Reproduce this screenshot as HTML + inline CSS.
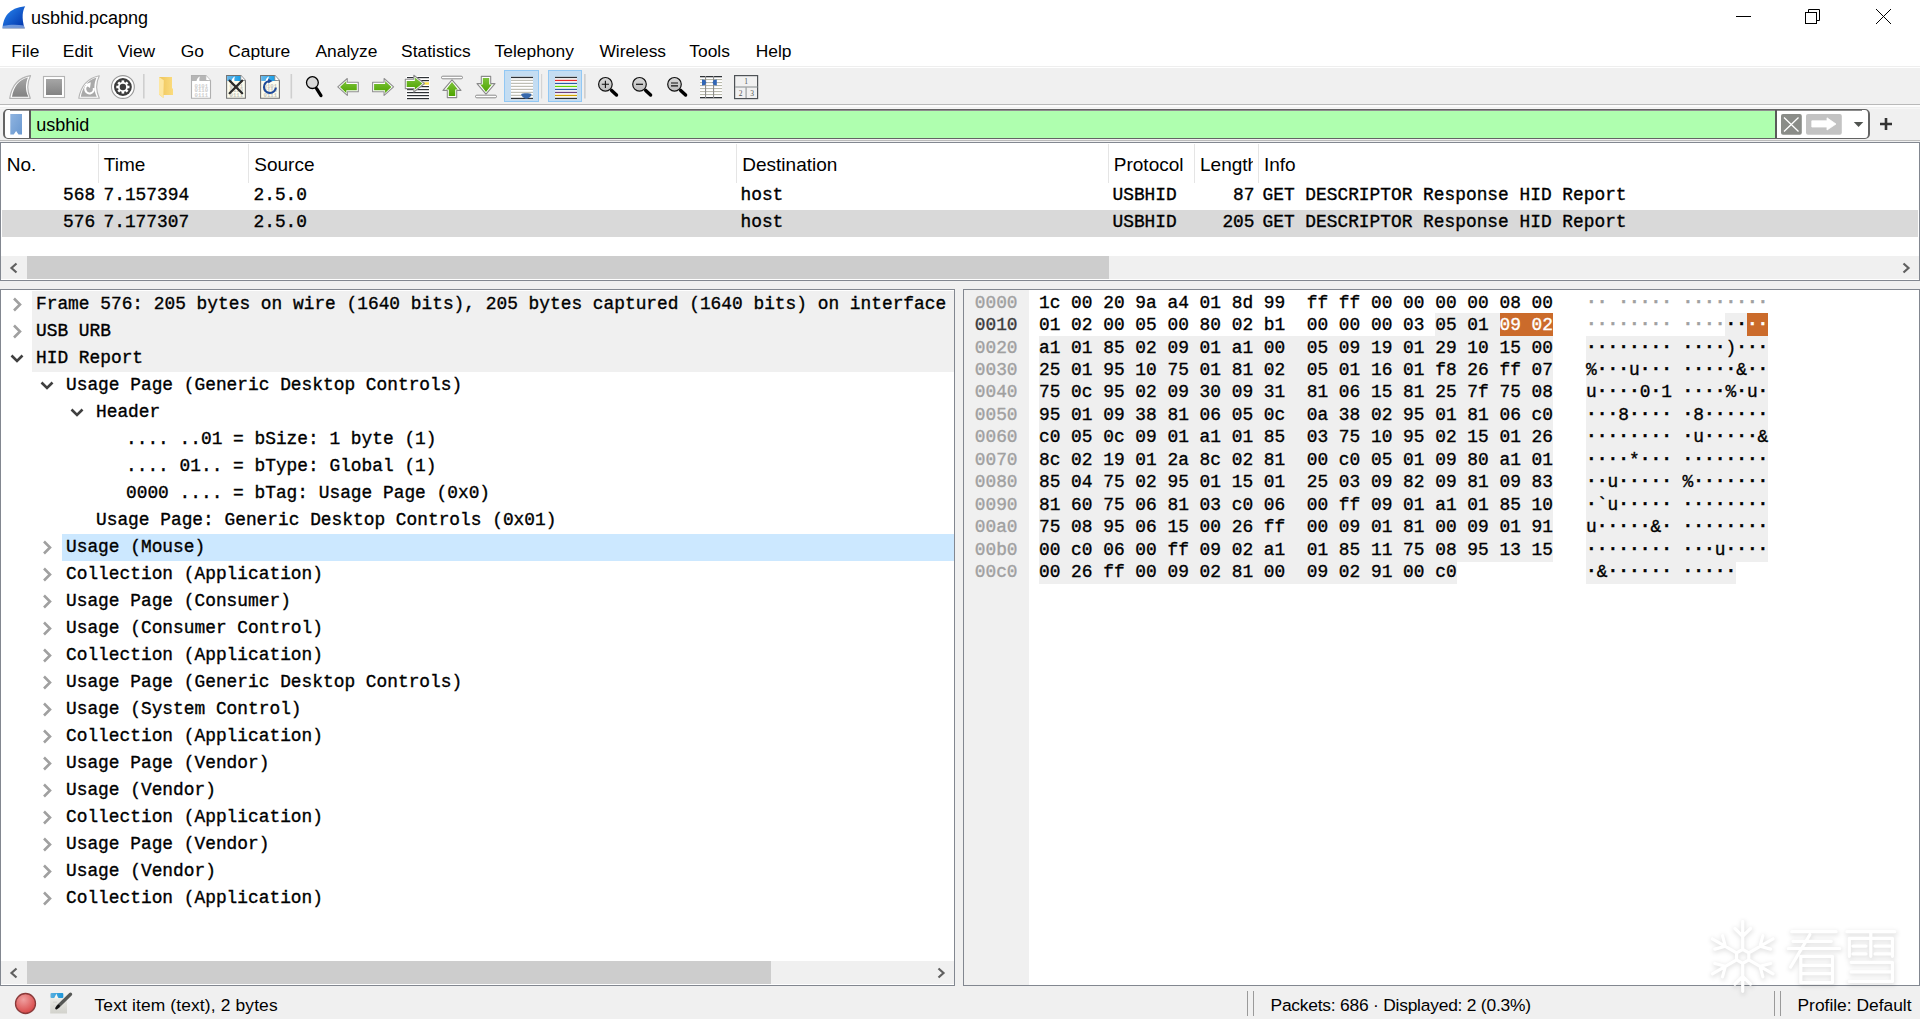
<!DOCTYPE html>
<html><head><meta charset="utf-8"><title>usbhid.pcapng</title>
<style>
html,body{margin:0;padding:0;}
body{width:1920px;height:1019px;overflow:hidden;position:relative;background:#f0f0f0;
font-family:"Liberation Sans", sans-serif;-webkit-font-smoothing:antialiased;}
svg{display:block;overflow:visible}
.m{-webkit-text-stroke:0.35px}
.d{font-weight:bold;position:relative;top:-1px}
</style></head><body>
<div style="position:absolute;left:0px;top:0px;width:1920px;height:66px;background:#ffffff;"></div>
<svg style="position:absolute;left:2px;top:5px;" width="25" height="24" viewBox="0 0 25 24"><defs><linearGradient id="tg" x1="0" y1="0" x2="1" y2="1">
<stop offset="0" stop-color="#2a8af2"/><stop offset="1" stop-color="#0030a8"/></linearGradient></defs>
<path d="M0.6 23.2 C1.2 12.5 6.5 2.8 23.2 1.2 C20.6 5.5 19.4 12.5 22.6 23.2 Z" fill="url(#tg)"/>
<path d="M0.6 23.2 H22.6 L22 20.5 C15 19.2 7 19.5 1.2 20.8 Z" fill="#8fb0e6" opacity="0.75"/>
<rect x="0.5" y="22.8" width="22.5" height="1" fill="#a0a8b8" opacity="0.6"/></svg>
<div style="position:absolute;left:31px;top:6.26px;height:25px;line-height:25px;font-family:'Liberation Sans', sans-serif;font-size:18px;color:#000;white-space:pre;">usbhid.pcapng</div>
<div style="position:absolute;left:1736px;top:16px;width:15px;height:1px;background:#000;"></div>
<svg style="position:absolute;left:1800px;top:5px;" width="26" height="26" viewBox="0 0 26 26"><rect x="5.5" y="7.5" width="11" height="11" fill="none" stroke="#000" stroke-width="1"/><path d="M8.5 7.5 V4.5 H19.5 V15.5 H16.5" fill="none" stroke="#000" stroke-width="1"/></svg>
<svg style="position:absolute;left:1870px;top:3px;" width="28" height="28" viewBox="0 0 28 28"><path d="M6 6 L21 21 M21 6 L6 21" stroke="#000" stroke-width="1"/></svg>
<div style="position:absolute;left:11.3px;top:38.97px;height:24px;line-height:24px;font-family:'Liberation Sans', sans-serif;font-size:17.4px;color:#000;white-space:pre;">File</div>
<div style="position:absolute;left:62.8px;top:38.97px;height:24px;line-height:24px;font-family:'Liberation Sans', sans-serif;font-size:17.4px;color:#000;white-space:pre;">Edit</div>
<div style="position:absolute;left:117.8px;top:38.97px;height:24px;line-height:24px;font-family:'Liberation Sans', sans-serif;font-size:17.4px;color:#000;white-space:pre;">View</div>
<div style="position:absolute;left:180.8px;top:38.97px;height:24px;line-height:24px;font-family:'Liberation Sans', sans-serif;font-size:17.4px;color:#000;white-space:pre;">Go</div>
<div style="position:absolute;left:228.3px;top:38.97px;height:24px;line-height:24px;font-family:'Liberation Sans', sans-serif;font-size:17.4px;color:#000;white-space:pre;">Capture</div>
<div style="position:absolute;left:315.5px;top:38.97px;height:24px;line-height:24px;font-family:'Liberation Sans', sans-serif;font-size:17.4px;color:#000;white-space:pre;">Analyze</div>
<div style="position:absolute;left:401.1px;top:38.97px;height:24px;line-height:24px;font-family:'Liberation Sans', sans-serif;font-size:17.4px;color:#000;white-space:pre;">Statistics</div>
<div style="position:absolute;left:494.6px;top:38.97px;height:24px;line-height:24px;font-family:'Liberation Sans', sans-serif;font-size:17.4px;color:#000;white-space:pre;">Telephony</div>
<div style="position:absolute;left:599.4px;top:38.97px;height:24px;line-height:24px;font-family:'Liberation Sans', sans-serif;font-size:17.4px;color:#000;white-space:pre;">Wireless</div>
<div style="position:absolute;left:689.3px;top:38.97px;height:24px;line-height:24px;font-family:'Liberation Sans', sans-serif;font-size:17.4px;color:#000;white-space:pre;">Tools</div>
<div style="position:absolute;left:755.6999999999999px;top:38.97px;height:24px;line-height:24px;font-family:'Liberation Sans', sans-serif;font-size:17.4px;color:#000;white-space:pre;">Help</div>
<div style="position:absolute;left:0px;top:66px;width:1920px;height:1px;background:#eeeeee;"></div>
<div style="position:absolute;left:0px;top:67px;width:1920px;height:1px;background:#ffffff;"></div>
<div style="position:absolute;left:0px;top:68px;width:1920px;height:36px;background:#f0f0f0;"></div>
<div style="position:absolute;left:0px;top:104px;width:1920px;height:1px;background:#b9b9b9;"></div>
<div style="position:absolute;left:0px;top:105px;width:1920px;height:2px;background:#fdfdfd;"></div>
<div style="position:absolute;left:0px;top:107px;width:1920px;height:35px;background:#f0f0f0;"></div>
<div style="position:absolute;left:0px;top:108px;width:1920px;height:1px;background:#f6f6f6;"></div>

<svg style="position:absolute;left:0;top:0" width="800" height="108" viewBox="0 0 800 108">
<defs>
<linearGradient id="gfin" x1="0" y1="0" x2="0" y2="1"><stop offset="0" stop-color="#a6a6a6"/><stop offset="1" stop-color="#838383"/></linearGradient>
<linearGradient id="ggreen" x1="0" y1="0" x2="0" y2="1"><stop offset="0" stop-color="#7cc23a"/><stop offset="1" stop-color="#4ea400"/></linearGradient>
<linearGradient id="gblue" x1="0" y1="0" x2="1" y2="0"><stop offset="0" stop-color="#6ab8ea"/><stop offset="1" stop-color="#0a9ae6"/></linearGradient>
<linearGradient id="glens" x1="0" y1="0" x2="0" y2="1"><stop offset="0" stop-color="#d8d8d8"/><stop offset="1" stop-color="#bdbdbd"/></linearGradient>
</defs>
<!-- 1 start capture fin (disabled) -->
<path d="M9.7 98.3 C11.7 86 17.5 77.8 30.5 75.7 C27.1 82.5 26.7 90 30.3 98.3 Z" fill="#fff" stroke="#b4b4b4" stroke-width="1.2" stroke-linejoin="round"/>
<path d="M12 96.7 C13.8 86.5 19 79.6 28 77.5 C25.4 83.6 25.1 90 28.4 96.7 Z" fill="url(#gfin)"/>
<!-- 2 stop -->
<rect x="43.5" y="76.5" width="21" height="21" fill="#fff" stroke="#b4b4b4" stroke-width="1.1"/>
<rect x="46" y="79" width="16" height="16" fill="url(#gfin)"/>
<!-- 3 restart fin -->
<path d="M78.8 98.2 C80.8 86.5 86.5 78.5 99.3 75.8 C95.8 83 95.5 90 99.3 98.2 Z" fill="#fff" stroke="#b4b4b4" stroke-width="1.1" stroke-linejoin="round"/>
<path d="M80.8 96.8 C82.6 87 87.6 80.2 96.5 77.6 C93.8 84 93.6 90 96.8 96.8 Z" fill="#a9a9a9"/>
<path d="M93.7 88 A4.3 4.3 0 1 1 88.2 85" fill="none" stroke="#fff" stroke-width="2.1"/>
<path d="M84.8 84.4 L90.8 82.3 L90 88 Z" fill="#fff"/>
<!-- 4 capture options gear -->
<circle cx="122.9" cy="87" r="11.4" fill="#fff" stroke="#9a9a9a" stroke-width="1.1"/>
<circle cx="122.9" cy="87" r="8.9" fill="#3c3c3c"/>
<g fill="#fff" transform="translate(122.9 87)">
<circle r="4.9"/>
<rect x="-1.3" y="-6.6" width="2.6" height="13.2"/>
<rect x="-1.3" y="-6.6" width="2.6" height="13.2" transform="rotate(45)"/>
<rect x="-1.3" y="-6.6" width="2.6" height="13.2" transform="rotate(90)"/>
<rect x="-1.3" y="-6.6" width="2.6" height="13.2" transform="rotate(135)"/>
</g>
<circle cx="122.9" cy="87" r="3.2" fill="#3c3c3c"/>
<!-- separator -->
<rect x="143" y="74" width="1.6" height="24.5" fill="#cfcfcf"/>
<!-- 5 open folder -->
<defs><linearGradient id="gfold" x1="0" y1="0" x2="1" y2="0"><stop offset="0" stop-color="#eec45a"/><stop offset="1" stop-color="#fbdc7e"/></linearGradient></defs>
<path d="M159 77 H172 V88.5 H173 V95 H163.5 V98 L159 94.5 Z" fill="url(#gfold)"/>
<path d="M159 77 L163.8 80.2 L163.3 98 L159 94.5 Z" fill="#fde7a2"/>
<!-- 6 gray document -->
<path d="M191.5 75.6 H205.8 L210.5 80.5 V98.3 H191.5 Z" fill="#fff" stroke="#b0b0b0" stroke-width="1.1"/>
<path d="M192 76.1 H205.6 L208 78.8 V81 H192 Z" fill="#b6b6b6"/>
<path d="M196.5 81 C197 78.5 198.5 77 200 76.5 C199.3 78 199.2 79.5 199.5 81 Z" fill="#fff"/>
<path d="M205.8 75.6 V80.5 H210.5" fill="#fff" stroke="#b0b0b0" stroke-width="0.8"/>
<g font-family="Liberation Mono, monospace" font-size="5.6" font-weight="bold" fill="#cdcdcd"><text x="194.6" y="87.6">0101</text><text x="194.6" y="92.2">0110</text><text x="194.6" y="96.8">0111</text></g>
<!-- 7 close document -->
<path d="M226.6 75.6 H240.8 L245.4 80.5 V98.3 H226.6 Z" fill="#fdfdef" stroke="#707070" stroke-width="1.1"/>
<path d="M227.1 76.1 H240.6 L243 78.8 V81 H227.1 Z" fill="url(#gblue)"/>
<path d="M231.5 81 C232 78.5 233.5 77 235 76.5 C234.3 78 234.2 79.5 234.5 81 Z" fill="#fff"/>
<path d="M240.8 75.6 V80.5 H245.4" fill="#fff" stroke="#808080" stroke-width="0.8"/>
<g font-family="Liberation Mono, monospace" font-size="5.6" font-weight="bold" fill="#c4c4bc"><text x="229.6" y="87.6">0101</text><text x="229.6" y="92.2">0110</text><text x="229.6" y="96.8">0111</text></g>
<path d="M229.6 80.6 L242.2 93.2 M242.2 80.6 L229.6 93.2" stroke="#2a2a2a" stroke-width="2.2" stroke-linecap="round"/>
<!-- 8 reload document -->
<path d="M260.6 75.6 H274.8 L279.4 80.5 V98.3 H260.6 Z" fill="#fdfdef" stroke="#707070" stroke-width="1.1"/>
<path d="M261.1 76.1 H274.6 L277 78.8 V81 H261.1 Z" fill="url(#gblue)"/>
<path d="M265.5 81 C266 78.5 267.5 77 269 76.5 C268.3 78 268.2 79.5 268.5 81 Z" fill="#fff"/>
<path d="M274.8 75.6 V80.5 H279.4" fill="#fff" stroke="#808080" stroke-width="0.8"/>
<g font-family="Liberation Mono, monospace" font-size="5.6" font-weight="bold" fill="#c4c4bc"><text x="263.6" y="87.6">0101</text><text x="263.6" y="92.2">0110</text><text x="263.6" y="96.8">0111</text></g>
<path d="M275.9 87.6 A6 6 0 1 1 269.4 81" fill="none" stroke="#1c4a9a" stroke-width="2"/>
<path d="M268.2 78.8 L272.6 81 L268.2 83.4 Z" fill="#1c4a9a"/>
<!-- separator -->
<rect x="290.5" y="74" width="1.6" height="24.5" fill="#cfcfcf"/>
<!-- 9 find -->
<circle cx="312.4" cy="82.6" r="5.9" fill="#d9d9d9" stroke="#000" stroke-width="1.3"/>
<path d="M316.6 88.6 L321 95.6" stroke="#000" stroke-width="3.2" stroke-linecap="round"/>
<!-- 10 back arrow -->
<path d="M337.8 86.9 L347.3 78.5 V82.2 H358.3 V91.8 H347.3 V95.4 Z" fill="#fff" stroke="#8f8f8f" stroke-width="1.1" stroke-linejoin="round"/>
<path d="M340 86.9 L346.3 81 V84 H356.8 V90.2 H346.3 V93 Z" fill="url(#ggreen)"/>
<!-- 11 forward arrow -->
<path d="M393.6 86.9 L384.1 78.5 V82.2 H372.6 V91.8 H384.1 V95.4 Z" fill="#fff" stroke="#8f8f8f" stroke-width="1.1" stroke-linejoin="round"/>
<path d="M391.4 86.9 L385.1 81 V84 H374.1 V90.2 H385.1 V93 Z" fill="url(#ggreen)"/>
<!-- 12 go to packet -->
<rect x="406.5" y="76" width="23" height="23.5" fill="#fff"/>
<g fill="#2e3236"><rect x="407" y="77" width="22" height="1.2"/><rect x="407" y="80" width="22" height="1.2"/><rect x="407" y="86" width="22" height="1.2"/><rect x="407" y="89" width="22" height="1.2"/><rect x="407" y="92" width="22" height="1.2"/><rect x="407" y="95" width="22" height="1.2"/><rect x="407" y="98" width="22" height="1.2"/></g>
<rect x="422" y="82.3" width="7" height="2.4" fill="#fbe04a"/>
<path d="M424.5 83.5 L413.8 75.3 V79.2 H405.3 V88.6 H413.8 V92 Z" fill="#fff" stroke="#8f8f8f" stroke-width="1.1" stroke-linejoin="round"/>
<path d="M422.4 83.5 L414.8 77.6 V80.9 H406.7 V87 H414.8 V89.6 Z" fill="url(#ggreen)"/>
<!-- 13 first packet -->
<rect x="441.5" y="76.2" width="21" height="2.6" rx="1.3" fill="#fff" stroke="#8a8a8a" stroke-width="1"/>
<path d="M452 79.8 L461 90.4 H456.7 V97.6 H447.3 V90.4 H443 Z" fill="#fff" stroke="#8a8a8a" stroke-width="1.1" stroke-linejoin="round"/>
<path d="M452 82 L457.8 89.4 H455.2 V96 H448.8 V89.4 H446.2 Z" fill="url(#ggreen)"/>
<!-- 14 last packet -->
<rect x="475.5" y="95.2" width="21" height="2.6" rx="1.3" fill="#fff" stroke="#8a8a8a" stroke-width="1"/>
<path d="M486 94.2 L495 83.6 H490.7 V76.4 H481.3 V83.6 H477 Z" fill="#fff" stroke="#8a8a8a" stroke-width="1.1" stroke-linejoin="round"/>
<path d="M486 92 L491.8 84.6 H489.2 V78 H482.8 V84.6 H480.2 Z" fill="url(#ggreen)"/>
<!-- 15 auto scroll (checked) -->
<rect x="504.5" y="70.5" width="34" height="31" fill="#c4ddf2" stroke="#92c8f4" stroke-width="1"/>
<rect x="511" y="76.5" width="22" height="23" fill="#fff"/>
<g fill="#b9b9ad"><rect x="511" y="79.8" width="22" height="1.1"/><rect x="511" y="82.8" width="22" height="1.1"/><rect x="511" y="85.8" width="22" height="1.1"/><rect x="511" y="88.8" width="22" height="1.1"/><rect x="511" y="91.8" width="22" height="1.1"/><rect x="511" y="94.8" width="22" height="1.1"/></g>
<rect x="511" y="76.8" width="22" height="1.3" fill="#2e3236"/>
<rect x="511" y="97.8" width="22" height="1.3" fill="#2e3236"/>
<path d="M521.2 94.3 C522 93 530.5 93 531.5 94.3 C531.5 96 528.5 98.8 526.4 98.8 C524.3 98.8 521.2 96 521.2 94.3 Z" fill="#3768ab"/>
<rect x="541" y="74" width="1.2" height="24.5" fill="#d4d4d4"/>
<!-- 16 colorize (checked) -->
<rect x="548.5" y="70.5" width="33" height="31" fill="#c4ddf2" stroke="#92c8f4" stroke-width="1"/>
<rect x="555" y="76.5" width="22" height="23" fill="#fff"/>
<rect x="555" y="76.8" width="22" height="1.3" fill="#2e3236"/>
<rect x="555" y="79.8" width="22" height="1.3" fill="#e8282a"/>
<rect x="555" y="82.8" width="22" height="1.3" fill="#2c5ca6"/>
<rect x="555" y="85.8" width="22" height="1.3" fill="#62d200"/>
<rect x="555" y="88.8" width="22" height="1.3" fill="#2c5ca6"/>
<rect x="555" y="91.8" width="22" height="1.3" fill="#6b4282"/>
<rect x="555" y="94.8" width="22" height="1.3" fill="#cfa200"/>
<rect x="555" y="97.8" width="22" height="1.3" fill="#2e3236"/>
<rect x="584" y="74" width="1.7" height="24.5" fill="#cfcfcf"/>
<!-- 17 zoom in -->
<circle cx="605.4" cy="84.3" r="6.8" fill="url(#glens)" stroke="#111" stroke-width="1.2"/>
<path d="M601.8 84.3 H609 M605.4 80.7 V87.9" stroke="#111" stroke-width="1.1"/>
<path d="M611.6 90.4 L616.5 95" stroke="#000" stroke-width="3.4" stroke-linecap="round"/>
<!-- 18 zoom out -->
<circle cx="639.5" cy="84.3" r="6.8" fill="url(#glens)" stroke="#111" stroke-width="1.2"/>
<path d="M636 84.3 H643" stroke="#111" stroke-width="1.2"/>
<path d="M645.7 90.4 L650.6 95" stroke="#000" stroke-width="3.4" stroke-linecap="round"/>
<!-- 19 normal size -->
<circle cx="674.5" cy="84.3" r="6.8" fill="url(#glens)" stroke="#111" stroke-width="1.2"/>
<path d="M671 83 H678 M671 85.8 H678" stroke="#111" stroke-width="1.2"/>
<path d="M680.7 90.4 L685.6 95" stroke="#000" stroke-width="3.4" stroke-linecap="round"/>
<!-- 20 resize columns -->
<rect x="700" y="76" width="22" height="22" fill="#fff"/>
<g fill="#b9b9ab"><rect x="700" y="79" width="22" height="1.1"/><rect x="700" y="82" width="22" height="1.1"/><rect x="700" y="85" width="22" height="1.1"/><rect x="700" y="88" width="22" height="1.1"/><rect x="700" y="91" width="22" height="1.1"/><rect x="700" y="94" width="22" height="1.1"/></g>
<rect x="700" y="76" width="22" height="1.3" fill="#2e3236"/>
<rect x="700" y="97" width="22" height="1.3" fill="#2e3236"/>
<rect x="705" y="76" width="1.1" height="22" fill="#8d8d8d"/>
<rect x="713" y="76" width="1.1" height="22" fill="#8d8d8d"/>
<path d="M702 79.5 L705 80 L706.2 82.5 L705 85 L702 85.6 Z" fill="#3166b6"/>
<path d="M716.8 79.5 L713.8 80 L712.6 82.5 L713.8 85 L716.8 85.6 Z" fill="#3166b6"/>
<!-- 21 layout -->
<rect x="734.6" y="75.6" width="23" height="23" fill="#f1f1f1" stroke="#4e5256" stroke-width="1.2"/>
<rect x="735" y="86.3" width="22.4" height="1.4" fill="#a4a8aa"/>
<rect x="745.4" y="87" width="1.4" height="11" fill="#a4a8aa"/>
<text x="746.2" y="83.8" font-family="Liberation Serif, serif" font-size="7.5" fill="#555" text-anchor="middle">1</text>
<text x="740.6" y="95.5" font-family="Liberation Serif, serif" font-size="7.5" fill="#555" text-anchor="middle">2</text>
<text x="752" y="95.5" font-family="Liberation Serif, serif" font-size="7.5" fill="#555" text-anchor="middle">3</text>
</svg>

<div style="position:absolute;left:3px;top:109px;width:1867px;height:30px;box-sizing:border-box;border:1px solid #646464;border-left-width:2px;border-right-width:2px;border-radius:5px;background:#fff;overflow:hidden"></div>
<div style="position:absolute;left:10px;top:110px;width:1852px;height:1px;background:#8e8e8e;"></div>
<div style="position:absolute;left:30px;top:111px;width:1745px;height:27px;background:#afffaf;"></div>
<div style="position:absolute;left:29px;top:110px;width:2px;height:28px;background:#5a5a5a;"></div>
<div style="position:absolute;left:1775px;top:110px;width:2px;height:28px;background:#5a5a5a;"></div>
<svg style="position:absolute;left:9px;top:113px;" width="15" height="22" viewBox="0 0 15 22"><defs><linearGradient id="bk" x1="0" y1="0" x2="1" y2="1"><stop offset="0" stop-color="#8fb4e0"/><stop offset="1" stop-color="#6a98d0"/></linearGradient></defs><path d="M1.3 1 H13 V21.5 L9.5 21.5 L7.1 18 L4.7 21.5 H1.3 Z" fill="url(#bk)"/></svg>
<div style="position:absolute;left:36.2px;top:112.76px;height:25px;line-height:25px;font-family:'Liberation Sans', sans-serif;font-size:18px;color:#000;white-space:pre;">usbhid</div>
<svg style="position:absolute;left:1776px;top:108px;" width="96" height="32" viewBox="0 0 96 32"><rect x="5" y="6" width="20.8" height="20.8" rx="2" fill="#8a8c88"/><path d="M8 9.5 L22.5 23.5 M22.5 9.5 L8 23.5" stroke="#fff" stroke-width="1.3"/><rect x="30" y="6" width="35.8" height="20.8" rx="2" fill="#c3c3c3"/><path d="M35.8 12.8 H51 V9.8 L60 16 L51 22 V19 H35.8 Z" fill="#fff" stroke="#fff" stroke-width="0.8" stroke-linejoin="round"/><path d="M77.8 14 H87.3 L82.55 19 Z" fill="#505450"/></svg>
<svg style="position:absolute;left:1878px;top:116px;" width="16" height="16" viewBox="0 0 16 16"><path d="M8 2 V14 M2 8 H14" stroke="#333" stroke-width="2.6"/></svg>
<div style="position:absolute;left:0px;top:140px;width:1920px;height:1px;background:#bbbbbb;"></div>
<div style="position:absolute;left:0px;top:142px;width:1920px;height:139px;box-sizing:border-box;border:1px solid #828790;background:#fff"></div>
<div style="position:absolute;left:98px;top:144px;width:1px;height:39px;background:#e5e5e5;"></div>
<div style="position:absolute;left:248px;top:144px;width:1px;height:39px;background:#e5e5e5;"></div>
<div style="position:absolute;left:736px;top:144px;width:1px;height:39px;background:#e5e5e5;"></div>
<div style="position:absolute;left:1108px;top:144px;width:1px;height:39px;background:#e5e5e5;"></div>
<div style="position:absolute;left:1194px;top:144px;width:1px;height:39px;background:#e5e5e5;"></div>
<div style="position:absolute;left:1258px;top:144px;width:1px;height:39px;background:#e5e5e5;"></div>
<div style="position:absolute;left:6.8px;top:151.21px;height:27px;line-height:27px;font-family:'Liberation Sans', sans-serif;font-size:19px;color:#000;white-space:pre;">No.</div>
<div style="position:absolute;left:103.8px;top:151.21px;height:27px;line-height:27px;font-family:'Liberation Sans', sans-serif;font-size:19px;color:#000;white-space:pre;">Time</div>
<div style="position:absolute;left:254.3px;top:151.21px;height:27px;line-height:27px;font-family:'Liberation Sans', sans-serif;font-size:19px;color:#000;white-space:pre;">Source</div>
<div style="position:absolute;left:742.3px;top:151.21px;height:27px;line-height:27px;font-family:'Liberation Sans', sans-serif;font-size:19px;color:#000;white-space:pre;">Destination</div>
<div style="position:absolute;left:1113.8px;top:151.21px;height:27px;line-height:27px;font-family:'Liberation Sans', sans-serif;font-size:19px;color:#000;white-space:pre;">Protocol</div>
<div style="position:absolute;left:1200px;top:151.21px;height:27px;line-height:27px;font-family:'Liberation Sans', sans-serif;font-size:19px;color:#000;white-space:pre;width:53px;overflow:hidden;">Length</div>
<div style="position:absolute;left:1264px;top:151.21px;height:27px;line-height:27px;font-family:'Liberation Sans', sans-serif;font-size:19px;color:#000;white-space:pre;">Info</div>
<div style="position:absolute;left:2px;top:210px;width:1916px;height:27px;background:#d9d9d9;"></div>
<div class="m" style="position:absolute;right:1824.8px;top:182.75px;height:25px;line-height:25px;font-family:'Liberation Mono', monospace;font-size:17.85px;color:#000;white-space:pre;text-align:right;">568</div>
<div class="m" style="position:absolute;left:103.5px;top:182.75px;height:25px;line-height:25px;font-family:'Liberation Mono', monospace;font-size:17.85px;color:#000;white-space:pre;">7.157394</div>
<div class="m" style="position:absolute;left:253.5px;top:182.75px;height:25px;line-height:25px;font-family:'Liberation Mono', monospace;font-size:17.85px;color:#000;white-space:pre;">2.5.0</div>
<div class="m" style="position:absolute;left:740.5px;top:182.75px;height:25px;line-height:25px;font-family:'Liberation Mono', monospace;font-size:17.85px;color:#000;white-space:pre;">host</div>
<div class="m" style="position:absolute;left:1112.5px;top:182.75px;height:25px;line-height:25px;font-family:'Liberation Mono', monospace;font-size:17.85px;color:#000;white-space:pre;">USBHID</div>
<div class="m" style="position:absolute;right:665.5px;top:182.75px;height:25px;line-height:25px;font-family:'Liberation Mono', monospace;font-size:17.85px;color:#000;white-space:pre;text-align:right;">87</div>
<div class="m" style="position:absolute;left:1262.5px;top:182.75px;height:25px;line-height:25px;font-family:'Liberation Mono', monospace;font-size:17.85px;color:#000;white-space:pre;">GET DESCRIPTOR Response HID Report</div>
<div class="m" style="position:absolute;right:1824.8px;top:209.75px;height:25px;line-height:25px;font-family:'Liberation Mono', monospace;font-size:17.85px;color:#000;white-space:pre;text-align:right;">576</div>
<div class="m" style="position:absolute;left:103.5px;top:209.75px;height:25px;line-height:25px;font-family:'Liberation Mono', monospace;font-size:17.85px;color:#000;white-space:pre;">7.177307</div>
<div class="m" style="position:absolute;left:253.5px;top:209.75px;height:25px;line-height:25px;font-family:'Liberation Mono', monospace;font-size:17.85px;color:#000;white-space:pre;">2.5.0</div>
<div class="m" style="position:absolute;left:740.5px;top:209.75px;height:25px;line-height:25px;font-family:'Liberation Mono', monospace;font-size:17.85px;color:#000;white-space:pre;">host</div>
<div class="m" style="position:absolute;left:1112.5px;top:209.75px;height:25px;line-height:25px;font-family:'Liberation Mono', monospace;font-size:17.85px;color:#000;white-space:pre;">USBHID</div>
<div class="m" style="position:absolute;right:665.5px;top:209.75px;height:25px;line-height:25px;font-family:'Liberation Mono', monospace;font-size:17.85px;color:#000;white-space:pre;text-align:right;">205</div>
<div class="m" style="position:absolute;left:1262.5px;top:209.75px;height:25px;line-height:25px;font-family:'Liberation Mono', monospace;font-size:17.85px;color:#000;white-space:pre;">GET DESCRIPTOR Response HID Report</div>
<div style="position:absolute;left:1px;top:256px;width:1918px;height:23px;background:#f0f0f0;"></div>
<div style="position:absolute;left:27px;top:256px;width:1082px;height:23px;background:#cdcdcd;"></div>
<svg style="position:absolute;left:8px;top:262px;" width="12" height="12" viewBox="0 0 12 12"><path d="M8.5 1.5 L3.5 6 L8.5 10.5" fill="none" stroke="#606060" stroke-width="2.2"/></svg>
<svg style="position:absolute;left:1900px;top:262px;" width="12" height="12" viewBox="0 0 12 12"><path d="M3.5 1.5 L8.5 6 L3.5 10.5" fill="none" stroke="#606060" stroke-width="2.2"/></svg>
<div style="position:absolute;left:0px;top:289px;width:955px;height:697px;box-sizing:border-box;border:1px solid #828790;background:#fff"></div>
<div style="position:absolute;left:32px;top:291px;width:922px;height:81px;background:#f0f0f0;"></div>
<div style="position:absolute;left:62px;top:534px;width:892px;height:27px;background:#cce8ff;"></div>
<svg style="position:absolute;left:10px;top:297px;" width="14" height="15" viewBox="0 0 14 15"><path d="M4 1.5 L10 7.5 L4 13.5" fill="none" stroke="#a0a0a0" stroke-width="2.6"/></svg>
<div class="m" style="position:absolute;left:36px;top:292.15px;height:25px;line-height:25px;font-family:'Liberation Mono', monospace;font-size:17.85px;color:#000;white-space:pre;">Frame 576: 205 bytes on wire (1640 bits), 205 bytes captured (1640 bits) on interface</div>
<svg style="position:absolute;left:10px;top:324px;" width="14" height="15" viewBox="0 0 14 15"><path d="M4 1.5 L10 7.5 L4 13.5" fill="none" stroke="#a0a0a0" stroke-width="2.6"/></svg>
<div class="m" style="position:absolute;left:36px;top:319.15px;height:25px;line-height:25px;font-family:'Liberation Mono', monospace;font-size:17.85px;color:#000;white-space:pre;">USB URB</div>
<svg style="position:absolute;left:10px;top:351px;" width="14" height="15" viewBox="0 0 14 15"><path d="M1.5 4.5 L7 10 L12.5 4.5" fill="none" stroke="#404040" stroke-width="2.6"/></svg>
<div class="m" style="position:absolute;left:36px;top:346.15px;height:25px;line-height:25px;font-family:'Liberation Mono', monospace;font-size:17.85px;color:#000;white-space:pre;">HID Report</div>
<svg style="position:absolute;left:40px;top:378px;" width="14" height="15" viewBox="0 0 14 15"><path d="M1.5 4.5 L7 10 L12.5 4.5" fill="none" stroke="#404040" stroke-width="2.6"/></svg>
<div class="m" style="position:absolute;left:66px;top:373.15px;height:25px;line-height:25px;font-family:'Liberation Mono', monospace;font-size:17.85px;color:#000;white-space:pre;">Usage Page (Generic Desktop Controls)</div>
<svg style="position:absolute;left:70px;top:405px;" width="14" height="15" viewBox="0 0 14 15"><path d="M1.5 4.5 L7 10 L12.5 4.5" fill="none" stroke="#404040" stroke-width="2.6"/></svg>
<div class="m" style="position:absolute;left:96px;top:400.15px;height:25px;line-height:25px;font-family:'Liberation Mono', monospace;font-size:17.85px;color:#000;white-space:pre;">Header</div>
<div class="m" style="position:absolute;left:126px;top:427.15px;height:25px;line-height:25px;font-family:'Liberation Mono', monospace;font-size:17.85px;color:#000;white-space:pre;">.... ..01 = bSize: 1 byte (1)</div>
<div class="m" style="position:absolute;left:126px;top:454.15px;height:25px;line-height:25px;font-family:'Liberation Mono', monospace;font-size:17.85px;color:#000;white-space:pre;">.... 01.. = bType: Global (1)</div>
<div class="m" style="position:absolute;left:126px;top:481.15px;height:25px;line-height:25px;font-family:'Liberation Mono', monospace;font-size:17.85px;color:#000;white-space:pre;">0000 .... = bTag: Usage Page (0x0)</div>
<div class="m" style="position:absolute;left:96px;top:508.15px;height:25px;line-height:25px;font-family:'Liberation Mono', monospace;font-size:17.85px;color:#000;white-space:pre;">Usage Page: Generic Desktop Controls (0x01)</div>
<svg style="position:absolute;left:40px;top:540px;" width="14" height="15" viewBox="0 0 14 15"><path d="M4 1.5 L10 7.5 L4 13.5" fill="none" stroke="#a0a0a0" stroke-width="2.6"/></svg>
<div class="m" style="position:absolute;left:66px;top:535.15px;height:25px;line-height:25px;font-family:'Liberation Mono', monospace;font-size:17.85px;color:#000;white-space:pre;">Usage (Mouse)</div>
<svg style="position:absolute;left:40px;top:567px;" width="14" height="15" viewBox="0 0 14 15"><path d="M4 1.5 L10 7.5 L4 13.5" fill="none" stroke="#a0a0a0" stroke-width="2.6"/></svg>
<div class="m" style="position:absolute;left:66px;top:562.15px;height:25px;line-height:25px;font-family:'Liberation Mono', monospace;font-size:17.85px;color:#000;white-space:pre;">Collection (Application)</div>
<svg style="position:absolute;left:40px;top:594px;" width="14" height="15" viewBox="0 0 14 15"><path d="M4 1.5 L10 7.5 L4 13.5" fill="none" stroke="#a0a0a0" stroke-width="2.6"/></svg>
<div class="m" style="position:absolute;left:66px;top:589.15px;height:25px;line-height:25px;font-family:'Liberation Mono', monospace;font-size:17.85px;color:#000;white-space:pre;">Usage Page (Consumer)</div>
<svg style="position:absolute;left:40px;top:621px;" width="14" height="15" viewBox="0 0 14 15"><path d="M4 1.5 L10 7.5 L4 13.5" fill="none" stroke="#a0a0a0" stroke-width="2.6"/></svg>
<div class="m" style="position:absolute;left:66px;top:616.15px;height:25px;line-height:25px;font-family:'Liberation Mono', monospace;font-size:17.85px;color:#000;white-space:pre;">Usage (Consumer Control)</div>
<svg style="position:absolute;left:40px;top:648px;" width="14" height="15" viewBox="0 0 14 15"><path d="M4 1.5 L10 7.5 L4 13.5" fill="none" stroke="#a0a0a0" stroke-width="2.6"/></svg>
<div class="m" style="position:absolute;left:66px;top:643.15px;height:25px;line-height:25px;font-family:'Liberation Mono', monospace;font-size:17.85px;color:#000;white-space:pre;">Collection (Application)</div>
<svg style="position:absolute;left:40px;top:675px;" width="14" height="15" viewBox="0 0 14 15"><path d="M4 1.5 L10 7.5 L4 13.5" fill="none" stroke="#a0a0a0" stroke-width="2.6"/></svg>
<div class="m" style="position:absolute;left:66px;top:670.15px;height:25px;line-height:25px;font-family:'Liberation Mono', monospace;font-size:17.85px;color:#000;white-space:pre;">Usage Page (Generic Desktop Controls)</div>
<svg style="position:absolute;left:40px;top:702px;" width="14" height="15" viewBox="0 0 14 15"><path d="M4 1.5 L10 7.5 L4 13.5" fill="none" stroke="#a0a0a0" stroke-width="2.6"/></svg>
<div class="m" style="position:absolute;left:66px;top:697.15px;height:25px;line-height:25px;font-family:'Liberation Mono', monospace;font-size:17.85px;color:#000;white-space:pre;">Usage (System Control)</div>
<svg style="position:absolute;left:40px;top:729px;" width="14" height="15" viewBox="0 0 14 15"><path d="M4 1.5 L10 7.5 L4 13.5" fill="none" stroke="#a0a0a0" stroke-width="2.6"/></svg>
<div class="m" style="position:absolute;left:66px;top:724.15px;height:25px;line-height:25px;font-family:'Liberation Mono', monospace;font-size:17.85px;color:#000;white-space:pre;">Collection (Application)</div>
<svg style="position:absolute;left:40px;top:756px;" width="14" height="15" viewBox="0 0 14 15"><path d="M4 1.5 L10 7.5 L4 13.5" fill="none" stroke="#a0a0a0" stroke-width="2.6"/></svg>
<div class="m" style="position:absolute;left:66px;top:751.15px;height:25px;line-height:25px;font-family:'Liberation Mono', monospace;font-size:17.85px;color:#000;white-space:pre;">Usage Page (Vendor)</div>
<svg style="position:absolute;left:40px;top:783px;" width="14" height="15" viewBox="0 0 14 15"><path d="M4 1.5 L10 7.5 L4 13.5" fill="none" stroke="#a0a0a0" stroke-width="2.6"/></svg>
<div class="m" style="position:absolute;left:66px;top:778.15px;height:25px;line-height:25px;font-family:'Liberation Mono', monospace;font-size:17.85px;color:#000;white-space:pre;">Usage (Vendor)</div>
<svg style="position:absolute;left:40px;top:810px;" width="14" height="15" viewBox="0 0 14 15"><path d="M4 1.5 L10 7.5 L4 13.5" fill="none" stroke="#a0a0a0" stroke-width="2.6"/></svg>
<div class="m" style="position:absolute;left:66px;top:805.15px;height:25px;line-height:25px;font-family:'Liberation Mono', monospace;font-size:17.85px;color:#000;white-space:pre;">Collection (Application)</div>
<svg style="position:absolute;left:40px;top:837px;" width="14" height="15" viewBox="0 0 14 15"><path d="M4 1.5 L10 7.5 L4 13.5" fill="none" stroke="#a0a0a0" stroke-width="2.6"/></svg>
<div class="m" style="position:absolute;left:66px;top:832.15px;height:25px;line-height:25px;font-family:'Liberation Mono', monospace;font-size:17.85px;color:#000;white-space:pre;">Usage Page (Vendor)</div>
<svg style="position:absolute;left:40px;top:864px;" width="14" height="15" viewBox="0 0 14 15"><path d="M4 1.5 L10 7.5 L4 13.5" fill="none" stroke="#a0a0a0" stroke-width="2.6"/></svg>
<div class="m" style="position:absolute;left:66px;top:859.15px;height:25px;line-height:25px;font-family:'Liberation Mono', monospace;font-size:17.85px;color:#000;white-space:pre;">Usage (Vendor)</div>
<svg style="position:absolute;left:40px;top:891px;" width="14" height="15" viewBox="0 0 14 15"><path d="M4 1.5 L10 7.5 L4 13.5" fill="none" stroke="#a0a0a0" stroke-width="2.6"/></svg>
<div class="m" style="position:absolute;left:66px;top:886.15px;height:25px;line-height:25px;font-family:'Liberation Mono', monospace;font-size:17.85px;color:#000;white-space:pre;">Collection (Application)</div>
<div style="position:absolute;left:1px;top:961px;width:953px;height:23px;background:#f0f0f0;"></div>
<div style="position:absolute;left:27px;top:961px;width:744px;height:23px;background:#cdcdcd;"></div>
<svg style="position:absolute;left:8px;top:967px;" width="12" height="12" viewBox="0 0 12 12"><path d="M8.5 1.5 L3.5 6 L8.5 10.5" fill="none" stroke="#606060" stroke-width="2.2"/></svg>
<svg style="position:absolute;left:935px;top:967px;" width="12" height="12" viewBox="0 0 12 12"><path d="M3.5 1.5 L8.5 6 L3.5 10.5" fill="none" stroke="#606060" stroke-width="2.2"/></svg>
<div style="position:absolute;left:963px;top:289px;width:957px;height:697px;box-sizing:border-box;border:1px solid #828790;background:#fff"></div>
<div style="position:absolute;left:964px;top:290px;width:65px;height:695px;background:#f0f0f0;"></div>
<div class="m" style="position:absolute;left:974.74px;top:290.65px;height:25px;line-height:25px;font-family:'Liberation Mono', monospace;font-size:17.85px;color:#a0a0a0;white-space:pre;">0000</div>
<div class="m" style="position:absolute;left:1039.0px;top:290.65px;height:25px;line-height:25px;font-family:'Liberation Mono', monospace;font-size:17.85px;color:#000;white-space:pre;">1c 00 20 9a a4 01 8d 99  ff ff 00 00 00 00 08 00</div>
<div class="m" style="position:absolute;left:1586.1100000000001px;top:290.65px;height:25px;line-height:25px;font-family:'Liberation Mono', monospace;font-size:17.85px;color:#000;white-space:pre;"><span class="d" style="color:#a0a0a0">·</span><span class="d" style="color:#a0a0a0">·</span> <span class="d" style="color:#a0a0a0">·</span><span class="d" style="color:#a0a0a0">·</span><span class="d" style="color:#a0a0a0">·</span><span class="d" style="color:#a0a0a0">·</span><span class="d" style="color:#a0a0a0">·</span> <span class="d" style="color:#a0a0a0">·</span><span class="d" style="color:#a0a0a0">·</span><span class="d" style="color:#a0a0a0">·</span><span class="d" style="color:#a0a0a0">·</span><span class="d" style="color:#a0a0a0">·</span><span class="d" style="color:#a0a0a0">·</span><span class="d" style="color:#a0a0a0">·</span><span class="d" style="color:#a0a0a0">·</span></div>
<div style="position:absolute;left:1435.27px;top:313.0px;width:117.81px;height:22.6px;background:#efefef;"></div>
<div style="position:absolute;left:1725.34px;top:313.0px;width:42.84px;height:22.6px;background:#efefef;"></div>
<div style="position:absolute;left:1499.53px;top:313.0px;width:53.55px;height:22.6px;background:#cb6b2b;"></div>
<div style="position:absolute;left:1746.76px;top:313.0px;width:21.42px;height:22.6px;background:#cb6b2b;"></div>
<div class="m" style="position:absolute;left:974.74px;top:313.10px;height:25px;line-height:25px;font-family:'Liberation Mono', monospace;font-size:17.85px;color:#3c3c3c;white-space:pre;">0010</div>
<div class="m" style="position:absolute;left:1039.0px;top:313.10px;height:25px;line-height:25px;font-family:'Liberation Mono', monospace;font-size:17.85px;color:#000;white-space:pre;">01 02 00 05 00 80 02 b1  00 00 00 03 05 01 <span style="color:#fff">09</span> <span style="color:#fff">02</span></div>
<div class="m" style="position:absolute;left:1586.1100000000001px;top:313.10px;height:25px;line-height:25px;font-family:'Liberation Mono', monospace;font-size:17.85px;color:#000;white-space:pre;"><span class="d" style="color:#a0a0a0">·</span><span class="d" style="color:#a0a0a0">·</span><span class="d" style="color:#a0a0a0">·</span><span class="d" style="color:#a0a0a0">·</span><span class="d" style="color:#a0a0a0">·</span><span class="d" style="color:#a0a0a0">·</span><span class="d" style="color:#a0a0a0">·</span><span class="d" style="color:#a0a0a0">·</span> <span class="d" style="color:#a0a0a0">·</span><span class="d" style="color:#a0a0a0">·</span><span class="d" style="color:#a0a0a0">·</span><span class="d" style="color:#a0a0a0">·</span><span class="d">·</span><span class="d">·</span><span class="d" style="color:#fff">·</span><span class="d" style="color:#fff">·</span></div>
<div style="position:absolute;left:1039.0px;top:335.6px;width:514.08px;height:22.6px;background:#efefef;"></div>
<div style="position:absolute;left:1586.11px;top:335.6px;width:182.07px;height:22.6px;background:#efefef;"></div>
<div class="m" style="position:absolute;left:974.74px;top:335.55px;height:25px;line-height:25px;font-family:'Liberation Mono', monospace;font-size:17.85px;color:#a0a0a0;white-space:pre;">0020</div>
<div class="m" style="position:absolute;left:1039.0px;top:335.55px;height:25px;line-height:25px;font-family:'Liberation Mono', monospace;font-size:17.85px;color:#000;white-space:pre;">a1 01 85 02 09 01 a1 00  05 09 19 01 29 10 15 00</div>
<div class="m" style="position:absolute;left:1586.1100000000001px;top:335.55px;height:25px;line-height:25px;font-family:'Liberation Mono', monospace;font-size:17.85px;color:#000;white-space:pre;"><span class="d">·</span><span class="d">·</span><span class="d">·</span><span class="d">·</span><span class="d">·</span><span class="d">·</span><span class="d">·</span><span class="d">·</span> <span class="d">·</span><span class="d">·</span><span class="d">·</span><span class="d">·</span>)<span class="d">·</span><span class="d">·</span><span class="d">·</span></div>
<div style="position:absolute;left:1039.0px;top:358.2px;width:514.08px;height:22.6px;background:#efefef;"></div>
<div style="position:absolute;left:1586.11px;top:358.2px;width:182.07px;height:22.6px;background:#efefef;"></div>
<div class="m" style="position:absolute;left:974.74px;top:358.00px;height:25px;line-height:25px;font-family:'Liberation Mono', monospace;font-size:17.85px;color:#a0a0a0;white-space:pre;">0030</div>
<div class="m" style="position:absolute;left:1039.0px;top:358.00px;height:25px;line-height:25px;font-family:'Liberation Mono', monospace;font-size:17.85px;color:#000;white-space:pre;">25 01 95 10 75 01 81 02  05 01 16 01 f8 26 ff 07</div>
<div class="m" style="position:absolute;left:1586.1100000000001px;top:358.00px;height:25px;line-height:25px;font-family:'Liberation Mono', monospace;font-size:17.85px;color:#000;white-space:pre;">%<span class="d">·</span><span class="d">·</span><span class="d">·</span>u<span class="d">·</span><span class="d">·</span><span class="d">·</span> <span class="d">·</span><span class="d">·</span><span class="d">·</span><span class="d">·</span><span class="d">·</span>&amp;<span class="d">·</span><span class="d">·</span></div>
<div style="position:absolute;left:1039.0px;top:380.8px;width:514.08px;height:22.6px;background:#efefef;"></div>
<div style="position:absolute;left:1586.11px;top:380.8px;width:182.07px;height:22.6px;background:#efefef;"></div>
<div class="m" style="position:absolute;left:974.74px;top:380.45px;height:25px;line-height:25px;font-family:'Liberation Mono', monospace;font-size:17.85px;color:#a0a0a0;white-space:pre;">0040</div>
<div class="m" style="position:absolute;left:1039.0px;top:380.45px;height:25px;line-height:25px;font-family:'Liberation Mono', monospace;font-size:17.85px;color:#000;white-space:pre;">75 0c 95 02 09 30 09 31  81 06 15 81 25 7f 75 08</div>
<div class="m" style="position:absolute;left:1586.1100000000001px;top:380.45px;height:25px;line-height:25px;font-family:'Liberation Mono', monospace;font-size:17.85px;color:#000;white-space:pre;">u<span class="d">·</span><span class="d">·</span><span class="d">·</span><span class="d">·</span>0<span class="d">·</span>1 <span class="d">·</span><span class="d">·</span><span class="d">·</span><span class="d">·</span>%<span class="d">·</span>u<span class="d">·</span></div>
<div style="position:absolute;left:1039.0px;top:403.4px;width:514.08px;height:22.6px;background:#efefef;"></div>
<div style="position:absolute;left:1586.11px;top:403.4px;width:182.07px;height:22.6px;background:#efefef;"></div>
<div class="m" style="position:absolute;left:974.74px;top:402.90px;height:25px;line-height:25px;font-family:'Liberation Mono', monospace;font-size:17.85px;color:#a0a0a0;white-space:pre;">0050</div>
<div class="m" style="position:absolute;left:1039.0px;top:402.90px;height:25px;line-height:25px;font-family:'Liberation Mono', monospace;font-size:17.85px;color:#000;white-space:pre;">95 01 09 38 81 06 05 0c  0a 38 02 95 01 81 06 c0</div>
<div class="m" style="position:absolute;left:1586.1100000000001px;top:402.90px;height:25px;line-height:25px;font-family:'Liberation Mono', monospace;font-size:17.85px;color:#000;white-space:pre;"><span class="d">·</span><span class="d">·</span><span class="d">·</span>8<span class="d">·</span><span class="d">·</span><span class="d">·</span><span class="d">·</span> <span class="d">·</span>8<span class="d">·</span><span class="d">·</span><span class="d">·</span><span class="d">·</span><span class="d">·</span><span class="d">·</span></div>
<div style="position:absolute;left:1039.0px;top:426.0px;width:514.08px;height:22.6px;background:#efefef;"></div>
<div style="position:absolute;left:1586.11px;top:426.0px;width:182.07px;height:22.6px;background:#efefef;"></div>
<div class="m" style="position:absolute;left:974.74px;top:425.35px;height:25px;line-height:25px;font-family:'Liberation Mono', monospace;font-size:17.85px;color:#a0a0a0;white-space:pre;">0060</div>
<div class="m" style="position:absolute;left:1039.0px;top:425.35px;height:25px;line-height:25px;font-family:'Liberation Mono', monospace;font-size:17.85px;color:#000;white-space:pre;">c0 05 0c 09 01 a1 01 85  03 75 10 95 02 15 01 26</div>
<div class="m" style="position:absolute;left:1586.1100000000001px;top:425.35px;height:25px;line-height:25px;font-family:'Liberation Mono', monospace;font-size:17.85px;color:#000;white-space:pre;"><span class="d">·</span><span class="d">·</span><span class="d">·</span><span class="d">·</span><span class="d">·</span><span class="d">·</span><span class="d">·</span><span class="d">·</span> <span class="d">·</span>u<span class="d">·</span><span class="d">·</span><span class="d">·</span><span class="d">·</span><span class="d">·</span>&amp;</div>
<div style="position:absolute;left:1039.0px;top:448.6px;width:514.08px;height:22.6px;background:#efefef;"></div>
<div style="position:absolute;left:1586.11px;top:448.6px;width:182.07px;height:22.6px;background:#efefef;"></div>
<div class="m" style="position:absolute;left:974.74px;top:447.80px;height:25px;line-height:25px;font-family:'Liberation Mono', monospace;font-size:17.85px;color:#a0a0a0;white-space:pre;">0070</div>
<div class="m" style="position:absolute;left:1039.0px;top:447.80px;height:25px;line-height:25px;font-family:'Liberation Mono', monospace;font-size:17.85px;color:#000;white-space:pre;">8c 02 19 01 2a 8c 02 81  00 c0 05 01 09 80 a1 01</div>
<div class="m" style="position:absolute;left:1586.1100000000001px;top:447.80px;height:25px;line-height:25px;font-family:'Liberation Mono', monospace;font-size:17.85px;color:#000;white-space:pre;"><span class="d">·</span><span class="d">·</span><span class="d">·</span><span class="d">·</span>*<span class="d">·</span><span class="d">·</span><span class="d">·</span> <span class="d">·</span><span class="d">·</span><span class="d">·</span><span class="d">·</span><span class="d">·</span><span class="d">·</span><span class="d">·</span><span class="d">·</span></div>
<div style="position:absolute;left:1039.0px;top:471.2px;width:514.08px;height:22.6px;background:#efefef;"></div>
<div style="position:absolute;left:1586.11px;top:471.2px;width:182.07px;height:22.6px;background:#efefef;"></div>
<div class="m" style="position:absolute;left:974.74px;top:470.25px;height:25px;line-height:25px;font-family:'Liberation Mono', monospace;font-size:17.85px;color:#a0a0a0;white-space:pre;">0080</div>
<div class="m" style="position:absolute;left:1039.0px;top:470.25px;height:25px;line-height:25px;font-family:'Liberation Mono', monospace;font-size:17.85px;color:#000;white-space:pre;">85 04 75 02 95 01 15 01  25 03 09 82 09 81 09 83</div>
<div class="m" style="position:absolute;left:1586.1100000000001px;top:470.25px;height:25px;line-height:25px;font-family:'Liberation Mono', monospace;font-size:17.85px;color:#000;white-space:pre;"><span class="d">·</span><span class="d">·</span>u<span class="d">·</span><span class="d">·</span><span class="d">·</span><span class="d">·</span><span class="d">·</span> %<span class="d">·</span><span class="d">·</span><span class="d">·</span><span class="d">·</span><span class="d">·</span><span class="d">·</span><span class="d">·</span></div>
<div style="position:absolute;left:1039.0px;top:493.8px;width:514.08px;height:22.6px;background:#efefef;"></div>
<div style="position:absolute;left:1586.11px;top:493.8px;width:182.07px;height:22.6px;background:#efefef;"></div>
<div class="m" style="position:absolute;left:974.74px;top:492.70px;height:25px;line-height:25px;font-family:'Liberation Mono', monospace;font-size:17.85px;color:#a0a0a0;white-space:pre;">0090</div>
<div class="m" style="position:absolute;left:1039.0px;top:492.70px;height:25px;line-height:25px;font-family:'Liberation Mono', monospace;font-size:17.85px;color:#000;white-space:pre;">81 60 75 06 81 03 c0 06  00 ff 09 01 a1 01 85 10</div>
<div class="m" style="position:absolute;left:1586.1100000000001px;top:492.70px;height:25px;line-height:25px;font-family:'Liberation Mono', monospace;font-size:17.85px;color:#000;white-space:pre;"><span class="d">·</span>`u<span class="d">·</span><span class="d">·</span><span class="d">·</span><span class="d">·</span><span class="d">·</span> <span class="d">·</span><span class="d">·</span><span class="d">·</span><span class="d">·</span><span class="d">·</span><span class="d">·</span><span class="d">·</span><span class="d">·</span></div>
<div style="position:absolute;left:1039.0px;top:516.4px;width:514.08px;height:22.6px;background:#efefef;"></div>
<div style="position:absolute;left:1586.11px;top:516.4px;width:182.07px;height:22.6px;background:#efefef;"></div>
<div class="m" style="position:absolute;left:974.74px;top:515.15px;height:25px;line-height:25px;font-family:'Liberation Mono', monospace;font-size:17.85px;color:#a0a0a0;white-space:pre;">00a0</div>
<div class="m" style="position:absolute;left:1039.0px;top:515.15px;height:25px;line-height:25px;font-family:'Liberation Mono', monospace;font-size:17.85px;color:#000;white-space:pre;">75 08 95 06 15 00 26 ff  00 09 01 81 00 09 01 91</div>
<div class="m" style="position:absolute;left:1586.1100000000001px;top:515.15px;height:25px;line-height:25px;font-family:'Liberation Mono', monospace;font-size:17.85px;color:#000;white-space:pre;">u<span class="d">·</span><span class="d">·</span><span class="d">·</span><span class="d">·</span><span class="d">·</span>&amp;<span class="d">·</span> <span class="d">·</span><span class="d">·</span><span class="d">·</span><span class="d">·</span><span class="d">·</span><span class="d">·</span><span class="d">·</span><span class="d">·</span></div>
<div style="position:absolute;left:1039.0px;top:539.0px;width:514.08px;height:22.6px;background:#efefef;"></div>
<div style="position:absolute;left:1586.11px;top:539.0px;width:182.07px;height:22.6px;background:#efefef;"></div>
<div class="m" style="position:absolute;left:974.74px;top:537.60px;height:25px;line-height:25px;font-family:'Liberation Mono', monospace;font-size:17.85px;color:#a0a0a0;white-space:pre;">00b0</div>
<div class="m" style="position:absolute;left:1039.0px;top:537.60px;height:25px;line-height:25px;font-family:'Liberation Mono', monospace;font-size:17.85px;color:#000;white-space:pre;">00 c0 06 00 ff 09 02 a1  01 85 11 75 08 95 13 15</div>
<div class="m" style="position:absolute;left:1586.1100000000001px;top:537.60px;height:25px;line-height:25px;font-family:'Liberation Mono', monospace;font-size:17.85px;color:#000;white-space:pre;"><span class="d">·</span><span class="d">·</span><span class="d">·</span><span class="d">·</span><span class="d">·</span><span class="d">·</span><span class="d">·</span><span class="d">·</span> <span class="d">·</span><span class="d">·</span><span class="d">·</span>u<span class="d">·</span><span class="d">·</span><span class="d">·</span><span class="d">·</span></div>
<div style="position:absolute;left:1039.0px;top:561.6px;width:417.69px;height:22.6px;background:#efefef;"></div>
<div style="position:absolute;left:1586.11px;top:561.6px;width:149.94px;height:22.6px;background:#efefef;"></div>
<div class="m" style="position:absolute;left:974.74px;top:560.05px;height:25px;line-height:25px;font-family:'Liberation Mono', monospace;font-size:17.85px;color:#a0a0a0;white-space:pre;">00c0</div>
<div class="m" style="position:absolute;left:1039.0px;top:560.05px;height:25px;line-height:25px;font-family:'Liberation Mono', monospace;font-size:17.85px;color:#000;white-space:pre;">00 26 ff 00 09 02 81 00  09 02 91 00 c0</div>
<div class="m" style="position:absolute;left:1586.1100000000001px;top:560.05px;height:25px;line-height:25px;font-family:'Liberation Mono', monospace;font-size:17.85px;color:#000;white-space:pre;"><span class="d">·</span>&amp;<span class="d">·</span><span class="d">·</span><span class="d">·</span><span class="d">·</span><span class="d">·</span><span class="d">·</span> <span class="d">·</span><span class="d">·</span><span class="d">·</span><span class="d">·</span><span class="d">·</span></div>
<div style="position:absolute;left:0px;top:986px;width:1920px;height:33px;background:#f0f0f0;"></div>
<svg style="position:absolute;left:14px;top:992px;" width="24" height="24" viewBox="0 0 24 24"><defs><radialGradient id="rg" cx="0.4" cy="0.3" r="0.7"><stop offset="0" stop-color="#f0a0a0"/><stop offset="1" stop-color="#d84848"/></radialGradient></defs><circle cx="11.5" cy="11.5" r="10" fill="url(#rg)" stroke="#8a3a3a" stroke-width="1.3"/></svg>
<svg style="position:absolute;left:49px;top:992px;" width="24" height="24" viewBox="0 0 24 24"><defs><linearGradient id="ng" x1="0" y1="0" x2="0" y2="1"><stop offset="0" stop-color="#f2f2ee"/><stop offset="1" stop-color="#d2d2cc"/></linearGradient><linearGradient id="nb" x1="0" y1="0" x2="1" y2="0"><stop offset="0" stop-color="#5ab0e0"/><stop offset="1" stop-color="#1a94d8"/></linearGradient></defs><rect x="1.2" y="1" width="16.8" height="20.5" fill="url(#ng)"/><rect x="1.5" y="1" width="12.8" height="5" rx="1" fill="url(#nb)"/><path d="M5 6.5 C6 4.5 6.8 2.5 7.5 1.5 C8 3 8.5 5 9.8 6.5 Z" fill="#f4f4f0"/><g fill="#d8d8d2"><rect x="4" y="9.5" width="4" height="1.5"/><rect x="4" y="13.5" width="3" height="1.2"/><rect x="4" y="17" width="11" height="1.2"/></g><path d="M9 14.5 L21.5 2.3" stroke="#565856" stroke-width="3.4" stroke-linecap="round"/><path d="M7.5 16.2 L9.6 14" stroke="#111" stroke-width="2.6" stroke-linecap="round"/></svg>
<div style="position:absolute;left:94.5px;top:992.97px;height:24px;line-height:24px;font-family:'Liberation Sans', sans-serif;font-size:17.4px;color:#000;white-space:pre;letter-spacing:0.14px;">Text item (text), 2 bytes</div>
<div style="position:absolute;left:1247px;top:991px;width:1px;height:25px;background:#9a9a9a;"></div>
<div style="position:absolute;left:1253px;top:991px;width:1px;height:25px;background:#9a9a9a;"></div>
<div style="position:absolute;left:1270.5px;top:992.97px;height:24px;line-height:24px;font-family:'Liberation Sans', sans-serif;font-size:17.4px;color:#000;white-space:pre;letter-spacing:-0.22px;">Packets: 686 · Displayed: 2 (0.3%)</div>
<div style="position:absolute;left:1774px;top:991px;width:1px;height:25px;background:#9a9a9a;"></div>
<div style="position:absolute;left:1780px;top:991px;width:1px;height:25px;background:#9a9a9a;"></div>
<div style="position:absolute;left:1797.5px;top:992.97px;height:24px;line-height:24px;font-family:'Liberation Sans', sans-serif;font-size:17.4px;color:#000;white-space:pre;">Profile: Default</div>
<svg style="position:absolute;left:1700px;top:910px;overflow:visible" width="220" height="100" viewBox="0 0 220 100"><defs><filter id="wsh" x="-20%" y="-20%" width="140%" height="140%"><feGaussianBlur stdDeviation="2.2"/></filter></defs><path d="M42.7 39.3 L42.7 11.3 M42.7 26.3 L50.5 18.5 M42.7 26.3 L34.9 18.5 M36.6 42.8 L12.4 28.8 M25.4 36.3 L22.5 25.7 M25.4 36.3 L14.8 39.1 M36.6 49.8 L12.4 63.8 M25.4 56.3 L14.8 53.5 M25.4 56.3 L22.5 66.9 M42.7 53.3 L42.7 81.3 M42.7 66.3 L34.9 74.1 M42.7 66.3 L50.5 74.1 M48.8 49.8 L73.0 63.8 M60.0 56.3 L62.9 66.9 M60.0 56.3 L70.6 53.5 M48.8 42.8 L73.0 28.8 M60.0 36.3 L70.6 39.1 M60.0 36.3 L62.9 25.7 M42.7 39.3 L36.6 42.8 L36.6 49.8 L42.7 53.3 L48.8 49.8 L48.8 42.8 Z M91.8 21.7 L136.1 21.7 M93.0 31.3 L131.3 31.3 M88.2 38.5 L139.7 38.5 M109.8 24.7 L90.6 57.1 M100.8 72.6 L100.8 46.3 L132.5 46.3 L132.5 72.6 L100.8 72.6 M100.8 55.3 L132.5 55.3 M100.8 63.7 L132.5 63.7 M146.9 21.7 L194.8 21.7 M149.3 46.3 L149.3 28.3 L192.4 28.3 L192.4 46.3 M170.8 21.7 L170.8 46.3 M152.9 36.1 L166.0 36.1 M175.0 36.1 L190.0 36.1 M152.9 43.9 L166.0 43.9 M175.0 43.9 L190.0 43.9 M151.1 52.3 L192.4 52.3 L192.4 71.4 L149.3 71.4 M151.1 61.9 L192.4 61.9" fill="none" stroke="#000" stroke-opacity="0.10" stroke-width="5" stroke-linecap="round" transform="translate(0.5 1.5)" filter="url(#wsh)"/><path d="M42.7 39.3 L42.7 11.3 M42.7 26.3 L50.5 18.5 M42.7 26.3 L34.9 18.5 M36.6 42.8 L12.4 28.8 M25.4 36.3 L22.5 25.7 M25.4 36.3 L14.8 39.1 M36.6 49.8 L12.4 63.8 M25.4 56.3 L14.8 53.5 M25.4 56.3 L22.5 66.9 M42.7 53.3 L42.7 81.3 M42.7 66.3 L34.9 74.1 M42.7 66.3 L50.5 74.1 M48.8 49.8 L73.0 63.8 M60.0 56.3 L62.9 66.9 M60.0 56.3 L70.6 53.5 M48.8 42.8 L73.0 28.8 M60.0 36.3 L70.6 39.1 M60.0 36.3 L62.9 25.7 M42.7 39.3 L36.6 42.8 L36.6 49.8 L42.7 53.3 L48.8 49.8 L48.8 42.8 Z M91.8 21.7 L136.1 21.7 M93.0 31.3 L131.3 31.3 M88.2 38.5 L139.7 38.5 M109.8 24.7 L90.6 57.1 M100.8 72.6 L100.8 46.3 L132.5 46.3 L132.5 72.6 L100.8 72.6 M100.8 55.3 L132.5 55.3 M100.8 63.7 L132.5 63.7 M146.9 21.7 L194.8 21.7 M149.3 46.3 L149.3 28.3 L192.4 28.3 L192.4 46.3 M170.8 21.7 L170.8 46.3 M152.9 36.1 L166.0 36.1 M175.0 36.1 L190.0 36.1 M152.9 43.9 L166.0 43.9 M175.0 43.9 L190.0 43.9 M151.1 52.3 L192.4 52.3 L192.4 71.4 L149.3 71.4 M151.1 61.9 L192.4 61.9" fill="none" stroke="#fff" stroke-width="3.2" stroke-linecap="round" stroke-linejoin="round"/></svg>
</body></html>
